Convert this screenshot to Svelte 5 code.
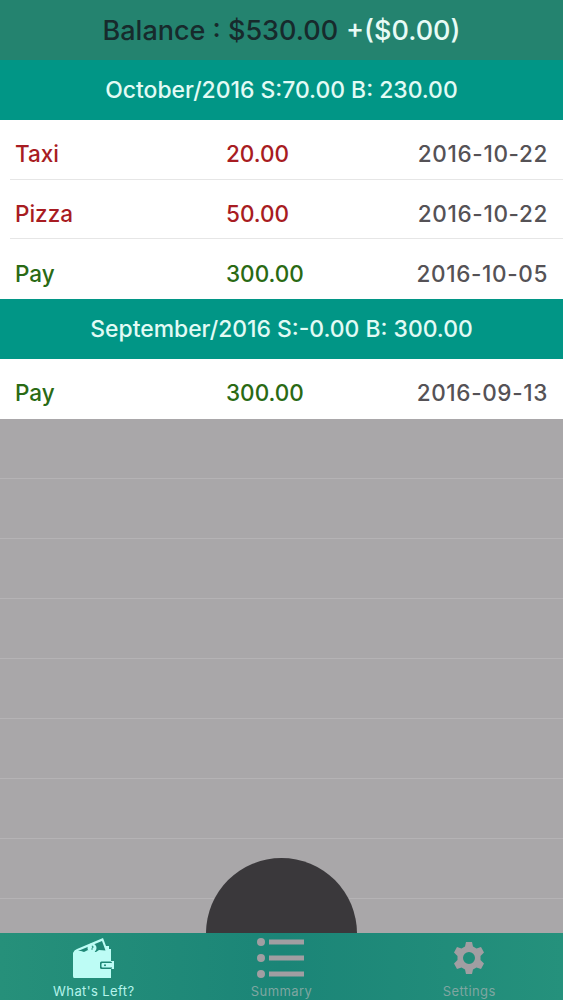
<script>
	const months = [
		{
			title: 'October/2016 S:70.00 B: 230.00',
			items: [
				{ name: 'Taxi', amount: '20.00', date: '2016-10-22', kind: 'spend' },
				{ name: 'Pizza', amount: '50.00', date: '2016-10-22', kind: 'spend' },
				{ name: 'Pay', amount: '300.00', date: '2016-10-05', kind: 'earn' }
			]
		},
		{
			title: 'September/2016 S:-0.00 B: 300.00',
			items: [{ name: 'Pay', amount: '300.00', date: '2016-09-13', kind: 'earn' }]
		}
	];
	const blanks = Array(8);
</script>

<div class="screen">
	<header class="balance">
		<span class="dark">Balance : $530.00</span>
		<span class="light">+($0.00)</span>
	</header>

	<main class="list">
		{#each months as month}
			<div class="month">{month.title}</div>
			{#each month.items as item, i}
				<div class="row {item.kind}" class:last={i === month.items.length - 1}>
					<span class="name">{item.name}</span>
					<span class="amount">{item.amount}</span>
					<span class="date">{item.date}</span>
				</div>
			{/each}
		{/each}
		<div class="blanks">
			{#each blanks as _}
				<div class="blank"></div>
			{/each}
		</div>
		<div class="circle"></div>
	</main>

	<nav class="tabs">
		<div class="tab active">
			<svg width="44" height="44" viewBox="0 0 44 44" aria-hidden="true">
				<path class="wallet" d="M1 16 Q2 13 5 12 L31 1 L34 9 L37 9 L37 12 L39 12 L39 24 L42 24 L42 32 L39 32 L39 41 L2 41 Q1 41 1 39 Z" />
				<path class="cut" d="M6 14 L30 4 L33.5 13.5 L27 13 L24 15 L20 15 L16 13 L12 15 L9 14 Z" />
				<circle class="wallet" cx="20" cy="11" r="4.5" />
				<path class="cut" d="M20 8.5 Q22 8.8 21.5 10.5 L20.4 11.5 L20.4 13 L19.6 13 L19.6 11 L20.6 10 Q20.6 9.4 19.6 9.4 Z" />
				<rect class="cut" x="28" y="24.5" width="12" height="7.5" rx="1.5" />
				<rect class="wallet" x="29.5" y="26" width="11" height="4.5" rx="1" />
				<circle class="cut" cx="33" cy="28.2" r="1" />
			</svg>
			<span>What's Left?</span>
		</div>
		<div class="tab">
			<svg width="50" height="44" viewBox="0 0 50 44" aria-hidden="true">
				<circle cx="5" cy="5" r="4" /><rect x="13" y="2.5" width="35" height="5" />
				<circle cx="5" cy="21" r="4" /><rect x="13" y="18.5" width="35" height="5" />
				<circle cx="5" cy="37" r="4" /><rect x="13" y="34.5" width="35" height="5" />
			</svg>
			<span>Summary</span>
		</div>
		<div class="tab">
			<svg width="44" height="44" viewBox="0 0 44 44" aria-hidden="true">
				<path fill-rule="evenodd" d="M19 5 L25 5 L26 9.5 L29.5 11.5 L34 10 L37 15.5 L33.5 19 L33.5 23 L37 26.5 L34 32 L29.5 30.5 L26 32.5 L25 37 L19 37 L18 32.5 L14.5 30.5 L10 32 L7 26.5 L10.5 23 L10.5 19 L7 15.5 L10 10 L14.5 11.5 L18 9.5 Z M22 15 A6 6 0 1 0 22 27 A6 6 0 1 0 22 15 Z" />
			</svg>
			<span>Settings</span>
		</div>
	</nav>
</div>

<style>
	:global(body) {
		margin: 0;
	}

	.screen {
		display: flex;
		flex-direction: column;
		height: 1000px;
		overflow: hidden;
		font-family: Inter, Roboto, 'Liberation Sans', sans-serif;
		background: #a9a7a9;
	}

	.balance {
		height: 60px;
		flex: none;
		display: flex;
		align-items: center;
		justify-content: center;
		gap: 8px;
		font-size: 27px;
		font-weight: 500;
		background: #24836f;
	}
	.dark { color: #172a2c; }
	.light { color: #e8fbf6; }

	.list {
		position: relative;
		flex: 1;
		min-height: 0;
		overflow: hidden;
	}

	.month {
		height: 59.75px;
		display: flex;
		align-items: center;
		justify-content: center;
		padding-top: 1px;
		font-size: 22.9px;
		font-weight: 500;
		color: #e2fbf5;
		background: #019686;
		box-sizing: border-box;
	}

	.row {
		height: 59.75px;
		box-sizing: border-box;
		display: grid;
		grid-template-columns: 211px 1fr auto;
		align-items: center;
		padding: 8px 15px 0 15px;
		font-size: 22.5px;
		font-weight: 500;
		background: #fff;
		position: relative;
	}
	.row:not(.last)::after {
		content: '';
		position: absolute;
		left: 10px;
		right: 0;
		bottom: 0;
		height: 1px;
		background: #e6e6e6;
	}
	.spend { color: #a81c22; }
	.earn { color: #2a6a14; }
	.date {
		color: #555256;
		letter-spacing: 0.65px;
	}

	.blank {
		height: 60px;
		border-bottom: 1px solid #b5b3b5;
		box-sizing: border-box;
	}

	.circle {
		position: absolute;
		left: 206px;
		top: 798px;
		width: 151px;
		height: 151px;
		border-radius: 50%;
		background: #3a383b;
	}

	.tabs {
		height: 67px;
		flex: none;
		display: grid;
		grid-template-columns: 1fr 1fr 1fr;
		background: linear-gradient(90deg, #26907a 0%, #1b8577 50%, #25917c 100%);
		position: relative;
	}
	.tab {
		display: flex;
		flex-direction: column;
		align-items: center;
		justify-content: flex-end;
		padding-bottom: 1px;
		font-size: 13px;
		letter-spacing: 0.4px;
		color: #7fa6a1;
	}
	.tab svg {
		fill: #a19ea2;
		margin-bottom: 2px;
	}
	.tab.active {
		color: #b5f4ec;
	}
	.wallet { fill: #bdfcf5; }
	.cut { fill: #1f8776; }
</style>
